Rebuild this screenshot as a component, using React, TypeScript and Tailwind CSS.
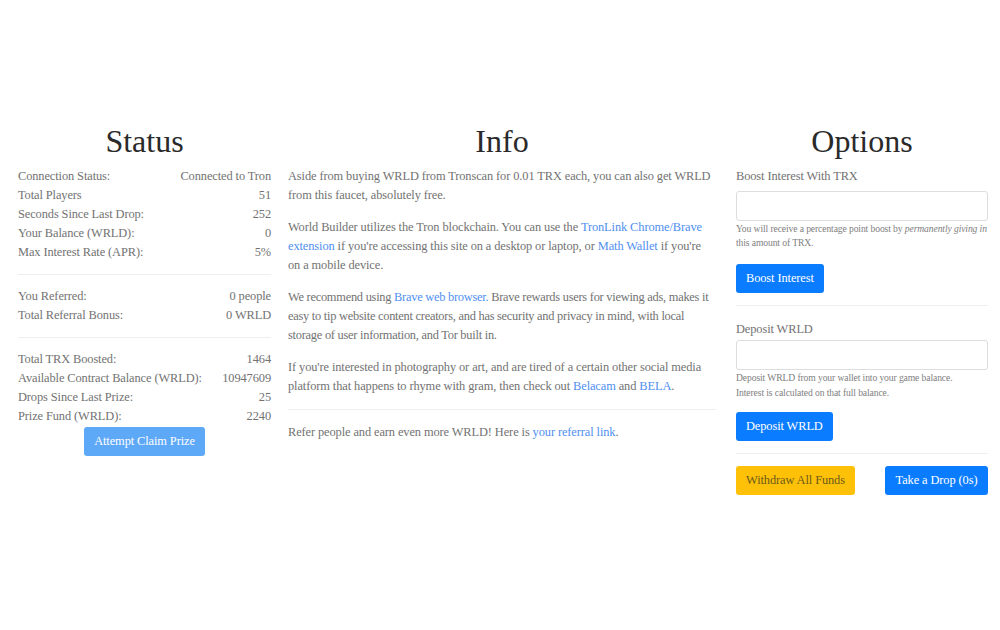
const serif = { fontFamily: '"Liberation Serif", "DejaVu Serif", serif' };

function Row({ label, value }: { label: string; value: string }) {
  return (
    <div className="flex justify-between h-[19px] leading-[19px]">
      <span>{label}</span>
      <span>{value}</span>
    </div>
  );
}

function Link({ children }: { children: React.ReactNode }) {
  return <a className="text-[#4f8ff0]">{children}</a>;
}

export default function App() {
  return (
    <div
      className="w-[1000px] h-[630px] bg-white text-[#727272] text-[12.4px] tracking-[-0.1px] pt-[121px] overflow-hidden"
      style={serif}
    >
      <div className="flex pl-[18px]">
        {/* Status */}
        <div className="w-[253px]">
          <h1 className="text-[32px] leading-[40px] text-[#2a2a2a] text-center mb-[6px] tracking-normal">Status</h1>
          <Row label="Connection Status:" value="Connected to Tron" />
          <Row label="Total Players" value="51" />
          <Row label="Seconds Since Last Drop:" value="252" />
          <Row label="Your Balance (WRLD):" value="0" />
          <Row label="Max Interest Rate (APR):" value="5%" />
          <hr className="border-[#eeeeee] my-[12px]" />
          <Row label="You Referred:" value="0 people" />
          <Row label="Total Referral Bonus:" value="0 WRLD" />
          <hr className="border-[#eeeeee] my-[12px]" />
          <Row label="Total TRX Boosted:" value="1464" />
          <Row label="Available Contract Balance (WRLD):" value="10947609" />
          <Row label="Drops Since Last Prize:" value="25" />
          <Row label="Prize Fund (WRLD):" value="2240" />
          <div className="flex justify-center mt-[1px]">
            <button className="bg-[#5ea8f8] text-white rounded-[3px] h-[29px] w-[121px]">
              Attempt Claim Prize
            </button>
          </div>
        </div>

        {/* Info */}
        <div className="w-[428px] ml-[17px] leading-[19px]">
          <h1 className="text-[32px] leading-[40px] text-[#2a2a2a] text-center mb-[6px] tracking-normal">Info</h1>
          <p className="mb-[13px]">
            Aside from buying WRLD from Tronscan for 0.01 TRX each, you can also get WRLD from this faucet, absolutely free.
          </p>
          <p className="mb-[13px]">
            World Builder utilizes the Tron blockchain. You can use the <Link>TronLink Chrome/Brave extension</Link> if
            you're accessing this site on a desktop or laptop, or <Link>Math Wallet</Link> if you're on a mobile device.
          </p>
          <p className="mb-[13px] tracking-[-0.25px]">
            We recommend using <Link>Brave web browser.</Link> Brave rewards users for viewing ads, makes it easy to tip
            website content creators, and has security and privacy in mind, with local storage of user information, and
            Tor built in.
          </p>
          <p>
            If you're interested in photography or art, and are tired of a certain other social media platform that
            happens to rhyme with gram, then check out <Link>Belacam</Link> and <Link>BELA</Link>.
          </p>
          <hr className="border-[#eeeeee] mt-[13px] mb-[13px]" />
          <p>
            Refer people and earn even more WRLD! Here is <Link>your referral link</Link>.
          </p>
        </div>

        {/* Options */}
        <div className="w-[252px] ml-[20px]">
          <h1 className="text-[32px] leading-[40px] text-[#2a2a2a] text-center mb-[6px] tracking-normal">Options</h1>
          <div className="leading-[19px] mb-[5px]">Boost Interest With TRX</div>
          <div className="h-[30px] border border-[#dddddd] rounded-[3px]" />
          <div className="text-[9.6px] leading-[14px] mt-[1px] text-[#808080]">
            You will receive a percentage point boost by <i>permanently giving in</i> this amount of TRX.
          </div>
          <button className="mt-[14px] bg-[#0a7cff] text-white rounded-[3px] h-[29px] px-[10px]">
            Boost Interest
          </button>
          <hr className="border-[#eeeeee] mt-[12px] mb-[14px]" />
          <div className="leading-[19px] mb-[1px]">Deposit WRLD</div>
          <div className="h-[30px] border border-[#dddddd] rounded-[3px]" />
          <div className="text-[9.6px] leading-[15px] text-[#808080]">
            Deposit WRLD from your wallet into your game balance.
            <br />
            Interest is calculated on that full balance.
          </div>
          <button className="mt-[12px] bg-[#0a7cff] text-white rounded-[3px] h-[29px] px-[10px]">
            Deposit WRLD
          </button>
          <hr className="border-[#eeeeee] mt-[12px] mb-[12px]" />
          <div className="flex justify-between">
            <button className="bg-[#ffc107] text-[#6b5a1e] rounded-[3px] h-[29px] w-[119px]">
              Withdraw All Funds
            </button>
            <button className="bg-[#0a7cff] text-white rounded-[3px] h-[29px] w-[103px]">
              Take a Drop (0s)
            </button>
          </div>
        </div>
      </div>
    </div>
  );
}
